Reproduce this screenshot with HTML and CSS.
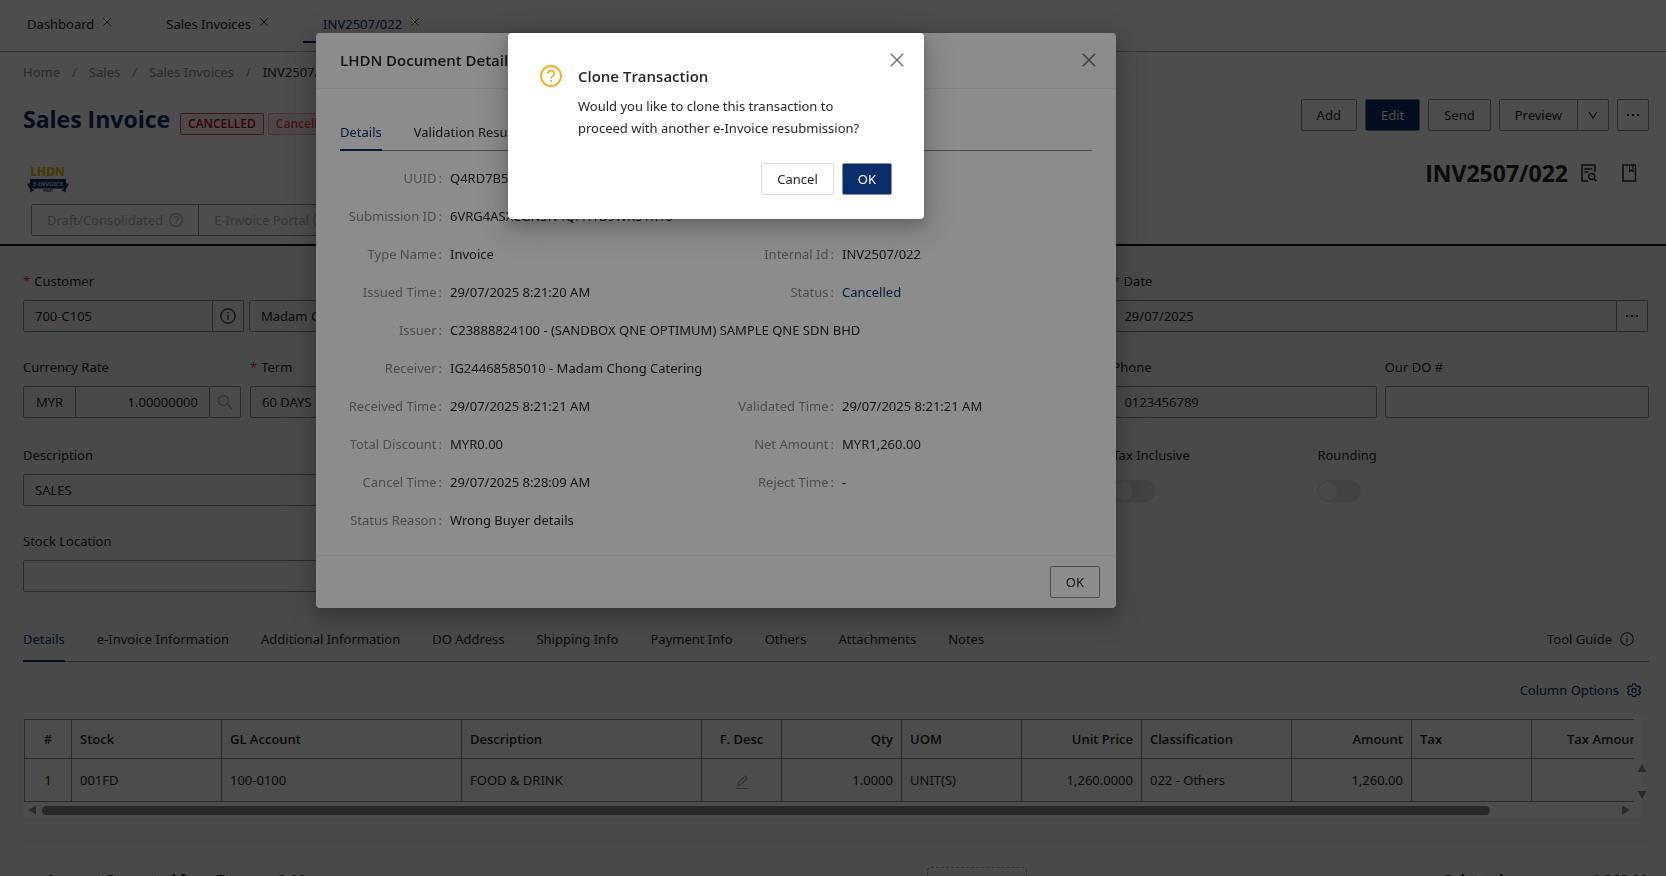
FILE: index.html
```html
<!DOCTYPE html>
<html lang="en">
<head>
<meta charset="utf-8">
<title>Sales Invoice INV2507/022</title>
<link rel="stylesheet" href="styles.css">
</head>
<body>
<svg class="defs" aria-hidden="true">
  <symbol id="close" viewBox="0 0 16 16"><path d="M1.800 1.800l12.400 12.400M14.200 1.800L1.800 14.200" fill="none" stroke="currentColor" stroke-width="1.500"/></symbol>
  <symbol id="info" viewBox="0 0 16 16"><circle cx="8" cy="8" r="7.2" fill="none" stroke="currentColor" stroke-width="1.2"/><path d="M8 6.8v5M8 4v1.4" stroke="currentColor" stroke-width="1.2"/></symbol>
  <symbol id="question" viewBox="0 0 22 22"><circle cx="11" cy="11" r="10" fill="none" stroke="currentColor" stroke-width="1.8"/><path d="M7.800 8.800c0-4.200 6.400-4.200 6.400 0 0 2.400-3.100 2.200-3.100 4.600" fill="none" stroke="currentColor" stroke-width="1.600"/><circle cx="11" cy="16" r="1.1" fill="currentColor"/></symbol>
  <symbol id="dots" viewBox="0 0 14 14"><path d="M1 6h2v2H1zM6 6h2v2H6zM11 6h2v2h-2z" fill="currentColor"/></symbol>
</svg>

<div class="page">
  <nav class="worktabs">
    <div class="worktab"><a href="#">Dashboard</a><button class="bare" aria-label="Close Dashboard"><svg class="i10"><use href="#close"/></svg></button></div>
    <div class="worktab"><a href="#">Sales Invoices</a><button class="bare" aria-label="Close Sales Invoices"><svg class="i10"><use href="#close"/></svg></button></div>
    <div class="worktab active"><a href="#">INV2507/022</a><button class="bare" aria-label="Close INV2507/022"><svg class="i10"><use href="#close"/></svg></button></div>
  </nav>

  <header class="head">
    <nav class="crumbs"><a href="#">Home</a><span>/</span><a href="#">Sales</a><span>/</span><a href="#">Sales Invoices</a><span>/</span><b>INV2507/022</b></nav>
    <div class="titlebar">
      <h1>Sales Invoice</h1>
      <span class="tag strong">CANCELLED</span><span class="tag">Cancelled</span>
      <div class="actions">
        <button class="btn">Add</button>
        <button class="btn primary">Edit</button>
        <button class="btn">Send</button>
        <div class="joined"><button class="btn">Preview</button><button class="btn icon" aria-label="More previews"><svg class="i12" viewBox="0 0 12 12"><path d="M2 3l4 6 4-6" fill="none" stroke="currentColor" stroke-width="1.2"/></svg></button></div>
        <button class="btn icon" aria-label="More"><svg class="i14"><use href="#dots"/></svg></button>
      </div>
    </div>
    <div class="docbar">
      <svg class="logo" viewBox="0 0 42 27" role="img" aria-label="LHDN e-Invoice ready">
        <text x="20.500" y="9.500" text-anchor="middle" font-size="12" font-weight="800" fill="#f5b800">LHDN</text>
        <path d="M0 18l5-2v7l3 1-4.500 2.500L3 23zM42 18l-5-2v7l-3 1 4.500 2.500L39 23z" fill="#17386f"/>
        <path d="M3 13h36v9q-3 1-8 .500H11q-5 .500-8-.500z" fill="#12336b"/>
        <text x="21" y="19.500" text-anchor="middle" font-size="6" font-weight="600" fill="#d8e0ee">E-INVOICE</text>
        <text x="21" y="25.500" text-anchor="middle" font-size="3" font-weight="700" fill="#12336b">READY</text>
      </svg>
      <div class="docno"><strong>INV2507/022</strong>
        <svg class="i18" viewBox="0 0 18 18"><path d="M8 17H2V1h13v7" fill="none" stroke="currentColor" stroke-width="1.500"/><path d="M4.500 5h8M4.500 8h4" stroke="currentColor" stroke-width="1.300"/><circle cx="11.800" cy="12.500" r="3" fill="none" stroke="currentColor" stroke-width="1.300"/><path d="M14 14.700l2.500 2.500" stroke="currentColor" stroke-width="1.500"/></svg>
        <svg class="i18" viewBox="0 0 18 18"><path d="M3 1h12.500v16H3z" fill="none" stroke="currentColor" stroke-width="1.500"/><path d="M9.500 1v6.500l1.800-1.500L13 7.500V1" fill="none" stroke="currentColor" stroke-width="1.200"/></svg>
      </div>
    </div>
    <div class="steps">
      <button disabled>Draft/Consolidated <svg class="i14"><use href="#question"/></svg></button>
      <button disabled>E-Invoice Portal <svg class="i14"><use href="#question"/></svg></button>
    </div>
  </header>

  <main class="form">
    <div class="row">
      <div class="main">
        <div class="field w221"><label class="req" for="cust">Customer</label><div class="joined"><input id="cust" value="700-C105" readonly><button class="btn icon" aria-label="Customer info"><svg class="i16"><use href="#info"/></svg></button></div></div>
        <div class="field grow"><input aria-label="Customer name" value="Madam Chong Catering" readonly></div>
      </div>
      <div class="side"><div class="field grow"><label class="req" for="date">Date</label><div class="joined datebox"><input id="date" value="29/07/2025" readonly><button class="btn icon" aria-label="Pick date"><svg class="i14"><use href="#dots"/></svg></button></div></div></div>
    </div>
    <div class="row">
      <div class="main">
        <div class="field w218"><label for="rate">Currency Rate</label><div class="joined"><span class="addon">MYR</span><input id="rate" class="num" value="1.00000000" readonly><button class="btn icon faint" aria-label="Look up rate"><svg class="i16" viewBox="0 0 16 16"><circle cx="6.500" cy="6.500" r="5" fill="none" stroke="currentColor" stroke-width="1.300"/><path d="M10.200 10.200L15 15" stroke="currentColor" stroke-width="1.500"/></svg></button></div></div>
        <div class="field grow"><label class="req" for="term">Term</label><input id="term" value="60 DAYS" readonly></div>
      </div>
      <div class="side"><div class="field grow"><label for="phone">Phone</label><input id="phone" value="0123456789" readonly></div><div class="field grow"><label for="dono">Our DO #</label><input id="dono" value="" readonly></div></div>
    </div>
    <div class="row">
      <div class="main"><div class="field grow"><label for="desc">Description</label><input id="desc" value="SALES" readonly></div></div>
      <div class="side switches"><div class="field"><label for="taxinc">Tax Inclusive</label><input id="taxinc" class="switch" type="checkbox" disabled></div><div class="field"><label for="rounding">Rounding</label><input id="rounding" class="switch" type="checkbox" disabled></div></div>
    </div>
    <div class="row">
      <div class="main"><div class="field grow"><label for="loc">Stock Location</label><input id="loc" value="" readonly></div></div>
      <div class="side"></div>
    </div>

    <nav class="tabs">
      <a class="active" href="#">Details</a><a href="#">e-Invoice Information</a><a href="#">Additional Information</a><a href="#">DO Address</a><a href="#">Shipping Info</a><a href="#">Payment Info</a><a href="#">Others</a><a href="#">Attachments</a><a href="#">Notes</a>
      <button class="bare guide">Tool Guide <svg class="i14"><use href="#info"/></svg></button>
    </nav>
    <div class="tools"><button class="bare options">Column Options <svg class="i14" viewBox="0 0 16 16"><path d="M6.500 1h3l.6 2.200 1.600.9 2.200-.7 1.500 2.600L13.800 7.600v1.800l1.600 1.600-1.500 2.600-2.200-.7-1.600.9L9.500 15.500h-3l-.6-1.700-1.600-.9-2.200.7L.6 11l1.600-1.600V7.600L.6 6l1.500-2.600 2.200.7 1.600-.9z" fill="none" stroke="currentColor" stroke-width="1.300"/><circle cx="8" cy="8.500" r="2.400" fill="none" stroke="currentColor" stroke-width="1.300"/></svg></button></div>

    <div class="gridbox">
      <div class="gridview">
        <table>
          <colgroup><col class="c47"><col class="c150"><col class="c240"><col class="c240"><col class="c80"><col class="c120"><col class="c120"><col class="c120"><col class="c150"><col class="c120"><col class="c120"><col class="c120"></colgroup>
          <thead><tr><th class="mid">#</th><th>Stock</th><th>GL Account</th><th>Description</th><th class="mid">F. Desc</th><th class="num">Qty</th><th>UOM</th><th class="num">Unit Price</th><th>Classification</th><th class="num">Amount</th><th>Tax</th><th class="num">Tax Amount</th></tr></thead>
          <tbody><tr><td class="mid">1</td><td>001FD</td><td>100-0100</td><td>FOOD &amp; DRINK</td><td class="mid faint"><svg class="i14" viewBox="0 0 14 14"><path d="M1 13.500h12.500M3 10.500l.6-2.800L10 1.200l2.200 2.200-6.500 6.500z" fill="none" stroke="currentColor" stroke-width="1.200"/></svg></td><td class="num">1.0000</td><td>UNIT(S)</td><td class="num">1,260.0000</td><td>022 - Others</td><td class="num">1,260.00</td><td></td><td></td></tr></tbody>
        </table>
      </div>
      <div class="vbar"><svg class="i10" viewBox="0 0 10 10"><path d="M5 1l4.500 8h-9z" fill="currentColor"/></svg><svg class="i10" viewBox="0 0 10 10"><path d="M5 9L.5 1h9z" fill="currentColor"/></svg></div>
      <div class="hbar"><svg class="i10" viewBox="0 0 10 10"><path d="M1 5l8-4.500v9z" fill="currentColor"/></svg><div class="track"><div class="thumb"></div></div><svg class="i10" viewBox="0 0 10 10"><path d="M9 5L1 .5v9z" fill="currentColor"/></svg></div>
    </div>

    <footer class="totals">
      <div class="exempt"><b>Amount Exempted from Tax :</b><span>0.00</span></div>
      <div class="drop"></div>
      <div class="sub"><b>Subtotal</b><span>1,260.00</span></div>
    </footer>
  </main>
</div>

<div class="mask"></div>
<section class="modal doc" role="dialog" aria-labelledby="doc-title">
  <header><h2 id="doc-title">LHDN Document Details</h2><button class="bare" aria-label="Close"><svg class="i16"><use href="#close"/></svg></button></header>
  <div class="body">
    <nav class="tabs"><a class="active" href="#">Details</a><a href="#">Validation Results</a></nav>
    <dl>
      <dt>UUID</dt><dd class="wide">Q4RD7B5S8XN2KE0QHM1B9WK51K10</dd>
      <dt>Submission ID</dt><dd class="wide">6VRG4ASXCGN5N4QFH1B9WK51K10</dd>
      <dt>Type Name</dt><dd>Invoice</dd><dt>Internal Id</dt><dd>INV2507/022</dd>
      <dt>Issued Time</dt><dd>29/07/2025 8:21:20 AM</dd><dt>Status</dt><dd><a href="#">Cancelled</a></dd>
      <dt>Issuer</dt><dd class="wide">C23888824100 - (SANDBOX QNE OPTIMUM) SAMPLE QNE SDN BHD</dd>
      <dt>Receiver</dt><dd class="wide">IG24468585010 - Madam Chong Catering</dd>
      <dt>Received Time</dt><dd>29/07/2025 8:21:21 AM</dd><dt>Validated Time</dt><dd>29/07/2025 8:21:21 AM</dd>
      <dt>Total Discount</dt><dd>MYR0.00</dd><dt>Net Amount</dt><dd>MYR1,260.00</dd>
      <dt>Cancel Time</dt><dd>29/07/2025 8:28:09 AM</dd><dt>Reject Time</dt><dd>-</dd>
      <dt>Status Reason</dt><dd class="wide">Wrong Buyer details</dd>
    </dl>
  </div>
  <footer><button class="btn">OK</button></footer>
</section>

<div class="mask"></div>
<section class="modal confirm" role="alertdialog" aria-labelledby="confirm-title">
  <svg class="i22"><use href="#question"/></svg>
  <div class="words"><h2 id="confirm-title">Clone Transaction</h2><p>Would you like to clone this transaction to<br>proceed with another e-Invoice resubmission?</p></div>
  <button class="bare x" aria-label="Close"><svg class="i16"><use href="#close"/></svg></button>
  <div class="choices"><button class="btn light">Cancel</button><button class="btn primary">OK</button></div>
</section>
</body>
</html>
```
FILE: styles.css
```css
:root { --ink: #262626; --navy: #082f6c; --line: #8f8f8f; --form: #f1f7f4; }
* { box-sizing: border-box; }
body { margin: 0; height: 100vh; overflow: hidden; color: var(--ink); font: 13px/22px "Noto Sans", "Open Sans", sans-serif; }
a { color: inherit; text-decoration: none; }
h1, h2, p, dl, dd { margin: 0; }
button, input { font: inherit; color: inherit; margin: 0; }
svg { flex: none; display: block; }
.defs { position: absolute; width: 0; height: 0; }
.i10 { width: 10px; height: 10px; } .i12 { width: 12px; height: 12px; } .i14 { width: 14px; height: 14px; }
.i16 { width: 16px; height: 16px; } .i18 { width: 18px; height: 18px; } .i22 { width: 22px; height: 22px; }
.page { height: 100vh; overflow: hidden; display: flex; flex-direction: column; background: #fff; }
.bare { border: 0; background: none; padding: 0; display: inline-flex; align-items: center; gap: 8px; }

.worktabs { display: flex; gap: 14px; height: 52px; padding: 4px 7px 8px; border-bottom: 1px solid #b0b0b0; flex: none; }
.worktab { display: flex; gap: 8px; padding: 9px 20px 0; border-bottom: 2px solid transparent; }
.worktab .bare { height: 18px; }
.worktab:nth-child(-n+2) .bare { color: #444; }
.worktab.active { border-color: var(--navy); }
.worktab.active a { color: var(--navy); }

.head { padding: 9px 17px 8px 23px; border-bottom: 2px solid #000c24; flex: none; }
.crumbs { display: flex; gap: 12px; color: #8c8c8c; }
.crumbs b { font-weight: 400; color: var(--ink); }
.titlebar { display: flex; align-items: center; margin-top: 16px; height: 32px; }
h1, h2, th, .tag, .docno { font-family: "Open Sans", "Noto Sans", sans-serif; }
h1 { font-size: 23px; line-height: 32px; font-weight: 700; color: var(--navy); margin: 8px 10px 0 0; }
.tag { font-weight: 600; font-size: 12px; line-height: 20px; padding: 0 7px; margin: 18px 4px 0 0; border: 1px solid #ffa39e; border-radius: 2px; background: #fff1f0; color: #f5404a; }
.tag.strong { border-color: #e84749; color: #b80010; }
.actions { margin-left: auto; display: flex; gap: 8px; }
.btn { height: 32px; padding: 0 15px; border: 1px solid var(--line); border-radius: 2px; background: #fff; white-space: nowrap; flex: none; }
.btn.primary { background: var(--navy); color: #fff; }
.btn.light { border-color: #d9d9d9; }
.btn.icon { width: 32px; padding: 0; display: flex; align-items: center; justify-content: center; }
.joined { display: flex; }
.joined > * + * { margin-left: -1px; }
.joined > :first-child { border-radius: 2px 0 0 2px; }
.faint { color: #a8a8a8; }
.docbar { display: flex; justify-content: space-between; height: 64px; margin-top: 9px; }
.logo { width: 42px; height: 27px; margin: 26px 0 0 4px; overflow: visible; }
.docno { display: flex; align-items: center; gap: 12px; height: 66px; padding-right: 11px; }
.docno strong { font-size: 23px; }
.docno svg + svg { margin-left: 10px; }
.steps { display: flex; width: 480px; margin-left: 8px; border: 1px solid var(--line); border-radius: 2px; }
.steps button { display: flex; align-items: center; gap: 6px; height: 30px; border: 0; border-right: 1px solid var(--line); background: #fff; color: #b0b0b0; padding: 0 15px; }
.steps button:last-child { border: 0; gap: 4px; }

.form { flex: 1; background: var(--form); padding: 22px 17px 0 23px; }
.row { display: flex; gap: 8px; height: 86px; }
.row:nth-child(2) { height: 88px; }
.main { flex: 1; display: flex; gap: 5px; align-items: flex-start; }
.row:nth-child(2) .main { gap: 9px; }
.side { flex: 0 0 33%; display: flex; gap: 8px; align-items: flex-start; }
.field { display: flex; flex-direction: column; }
.field label { height: 32px; line-height: 26px; }
.field > :first-child:not(label) { margin-top: 32px; }
.req::before { content: "*"; color: #e0323c; margin-right: 4px; }
.grow { flex: 1; min-width: 0; }
.w221 { width: 221px; flex: none; } .w218 { width: 218px; flex: none; }
input:not(.switch) { height: 32px; width: 100%; min-width: 0; padding: 0 11px; border: 1px solid var(--line); border-radius: 2px; background: #f5f5f5; outline: 0; }
.field .btn { background: #f8f8f8; }
.num { text-align: right; }
.addon { flex: 0 0 53px; height: 32px; line-height: 30px; text-align: center; border: 1px solid var(--line); background: #f5f5f5; }
.datebox { margin-right: 1px; }
.switches .field { width: 197px; }
.switch { appearance: none; width: 44px; height: 22px; margin-top: 6px; border-radius: 11px; background: #dcdcde; display: flex; align-items: center; padding-left: 2px; }
.switch::before { content: ""; width: 18px; height: 18px; border-radius: 9px; background: #f5f5f5; }

.tabs { display: flex; gap: 32px; align-items: stretch; height: 46px; border-bottom: 1px solid var(--line); }
.tabs > a { padding-top: 12px; margin-bottom: -1px; border-bottom: 2px solid transparent; white-space: nowrap; }
.tabs > .active { border-color: var(--navy); color: var(--navy); }
.form .tabs { margin-top: 2px; }
.doc .tabs > a { padding-top: 16px; }
.guide { margin-left: auto; padding-right: 15px; }
.tools { display: flex; justify-content: flex-end; padding: 17px 8px 0 0; }
.options { color: var(--navy); }

.gridbox { display: grid; grid-template-columns: 1fr 15px; background: #fdfdfd; margin-top: 17px; padding-top: 1px; color: var(--ink); }
.gridview { overflow: hidden; padding-left: 1px; }
table { table-layout: fixed; border-collapse: collapse; width: 1628px; background: #fcfcfc; }
th, td { border: 1px solid var(--line); padding: 0 8px; height: 43px; text-align: left; white-space: nowrap; }
th { font-weight: 600; height: 39px; }
.mid { text-align: center; } th.num, td.num { text-align: right; }
td.mid svg { display: inline-block; vertical-align: middle; }
.c47 { width: 47px; } .c80 { width: 80px; } .c120 { width: 120px; } .c150 { width: 150px; } .c240 { width: 240px; }
.vbar { grid-row: 1 / 3; grid-column: 2; display: flex; flex-direction: column; justify-content: space-between; align-items: center; padding: 44px 0 18px; background: linear-gradient(90deg, #fdfdfd 40%, #ececec); color: #8c8c8c; }
.hbar { display: flex; align-items: center; gap: 5px; height: 16px; padding: 0 3px 0 4px; color: #8c8c8c; }
.track { flex: 1; }
.thumb { width: 92%; height: 9px; border-radius: 5px; background: #888; }
.totals { display: flex; justify-content: space-between; align-items: flex-start; margin-top: 23px; border-top: 1px solid #e6ebe8; padding: 27px 1px 0 23px; font-size: 14px; }
.exempt { display: flex; gap: 30px; }
.sub { display: flex; justify-content: space-between; width: 204px; }
.drop { width: 100px; height: 40px; border: 1px dashed #999; border-radius: 4px; margin: -2px 0 0 204px; }

.mask { position: fixed; inset: 0; background: rgba(0, 0, 0, .45); }
.modal { position: absolute; left: 0; right: 234px; top: 33px; margin: 0 auto; background: #fff; border-radius: 4px; box-shadow: 0 6px 16px rgba(0, 0, 0, .2), 0 9px 28px 8px rgba(0, 0, 0, .12); }
.modal h2 { font-size: 15px; line-height: 22px; font-weight: 600; }
.modal .bare { color: #737373; }
.doc { width: 800px; }
.doc > header { display: flex; justify-content: space-between; align-items: center; height: 56px; padding: 0 19px 2px 24px; border-bottom: 1px solid #f0f0f0; }
.doc .body { padding: 16px 24px; }
.doc dl { display: grid; grid-template-columns: 102px 274fr 102px 250fr; column-gap: 8px; padding-top: 8px; }
.doc dt, .doc dd { height: 38px; line-height: 38px; white-space: nowrap; }
.doc dt { text-align: right; color: #8c8c8c; }
.doc dt::after { content: ":"; margin-left: 2px; }
.doc dd a { color: var(--navy); }
.wide { grid-column: span 3; }
.doc > footer { display: flex; justify-content: flex-end; padding: 10px 16px; border-top: 1px solid #f0f0f0; }
.confirm { width: 416px; padding: 32px 32px 24px; display: grid; grid-template-columns: 22px 1fr 16px; column-gap: 16px; }
.confirm > .i22 { color: #faad14; }
.words { grid-column: 2 / 4; }
.words p { margin-top: 8px; white-space: nowrap; }
.x { position: absolute; right: 19px; top: 19px; }
.choices { grid-column: 1 / 4; display: flex; justify-content: flex-end; gap: 8px; margin-top: 24px; }
```
